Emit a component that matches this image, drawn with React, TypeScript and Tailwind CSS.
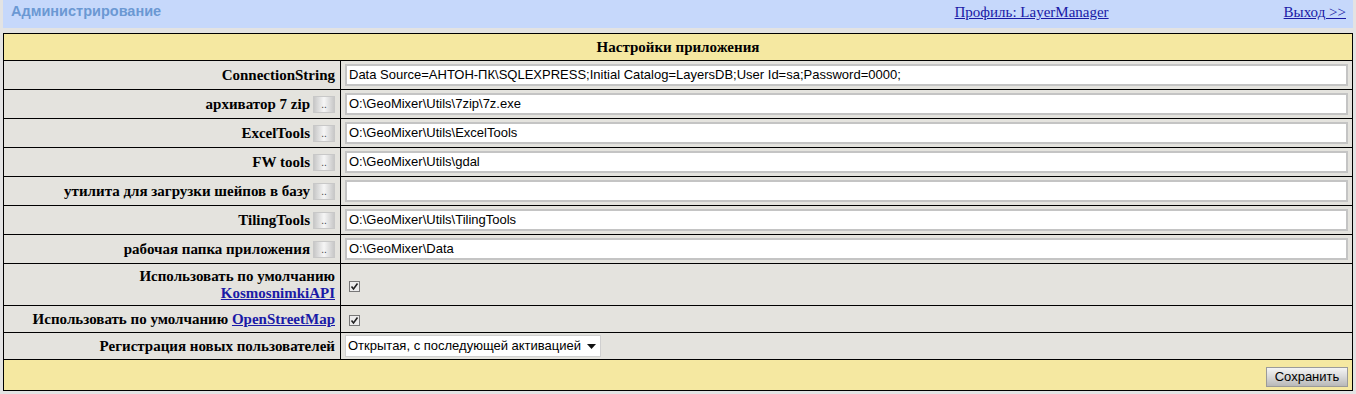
const ROWS: { label: string; value: string; browse: boolean }[] = [
  { label: "ConnectionString", value: "Data Source=АНТОН-ПК\\SQLEXPRESS;Initial Catalog=LayersDB;User Id=sa;Password=0000;", browse: false },
  { label: "архиватор 7 zip", value: "O:\\GeoMixer\\Utils\\7zip\\7z.exe", browse: true },
  { label: "ExcelTools", value: "O:\\GeoMixer\\Utils\\ExcelTools", browse: true },
  { label: "FW tools", value: "O:\\GeoMixer\\Utils\\gdal", browse: true },
  { label: "утилита для загрузки шейпов в базу", value: "", browse: true },
  { label: "TilingTools", value: "O:\\GeoMixer\\Utils\\TilingTools", browse: true },
  { label: "рабочая папка приложения", value: "O:\\GeoMixer\\Data", browse: true },
];

function BrowseButton() {
  return (
    <span className="ml-[3px] inline-flex h-[17px] w-[22px] items-center justify-center border border-[#c8c8c8] bg-[linear-gradient(to_right,#c8c8c8,#f6f6f6_50%,#c8c8c8)] align-middle font-['Liberation_Sans',Arial,sans-serif] text-[10px] font-normal leading-none text-[#444]">
      ..
    </span>
  );
}

function Check() {
  return (
    <span className="inline-flex h-[11px] w-[11px] items-center justify-center border border-[#777] bg-[#ececec]">
      <svg width="9" height="9" viewBox="0 0 9 9">
        <path d="M1.5 4.5 L3.5 7 L7.5 1.5" fill="none" stroke="#222" strokeWidth="1.6" />
      </svg>
    </span>
  );
}

const labelCell =
  "border border-black bg-[#e4e3de] pr-[5px] text-right align-middle font-['Liberation_Serif','Times_New_Roman',serif] text-[15px] font-bold text-black";
const valueCell = "border border-black bg-[#e4e3de] px-[4px] align-middle";
const link = "text-[#1a1aa6] underline";

export default function App() {
  return (
    <div className="min-h-[394px] w-[1356px] bg-[#e3e3e3] px-[3px]">
      {/* top bar */}
      <div className="flex h-[28px] items-start bg-[#c6d8fb] pl-[8px] pr-[7px] pt-[1px]">
        <span className="font-['Liberation_Sans',Arial,sans-serif] text-[14.5px] font-bold text-[#6b98d3]">
          Администрирование
        </span>
        <a className={`ml-auto font-['Liberation_Serif','Times_New_Roman',serif] text-[15px] ${link}`}>
          Профиль: LayerManager
        </a>
        <a className={`ml-[175px] font-['Liberation_Serif','Times_New_Roman',serif] text-[15px] ${link}`}>
          Выход &gt;&gt;
        </a>
      </div>

      <table className="mt-[5px] w-full border-collapse border border-black">
        <tbody>
          <tr className="h-[27px]">
            <td
              colSpan={2}
              className="border border-black bg-[#f5e8a1] text-center font-['Liberation_Serif','Times_New_Roman',serif] text-[15px] font-bold text-black"
            >
              Настройки приложения
            </td>
          </tr>
          {ROWS.map((r) => (
            <tr key={r.label} className="h-[29px]">
              <td className={`${labelCell} w-[337px] whitespace-nowrap`}>
                <span className="align-middle">{r.label}</span>
                {r.browse && <BrowseButton />}
              </td>
              <td className={valueCell}>
                <div className="flex h-[22px] items-center border-2 border-[#c4c4c4] bg-white px-[2px] font-['Liberation_Sans',Arial,sans-serif] text-[13px] text-black">
                  {r.value}
                </div>
              </td>
            </tr>
          ))}
          <tr className="h-[42px]">
            <td className={`${labelCell} bg-[#e0e0e0] leading-[17px]`}>
              Использовать по умолчанию
              <br />
              <a className={link}>KosmosnimkiAPI</a>
            </td>
            <td className={`${valueCell} bg-[#e0e0e0] pl-[8px]`}>
              <Check />
            </td>
          </tr>
          <tr className="h-[27px]">
            <td className={`${labelCell} bg-[#e0e0e0]`}>
              Использовать по умолчанию <a className={link}>OpenStreetMap</a>
            </td>
            <td className={`${valueCell} bg-[#e0e0e0] pl-[8px]`}>
              <Check />
            </td>
          </tr>
          <tr className="h-[27px]">
            <td className={`${labelCell} bg-[#e0e0e0]`}>Регистрация новых пользователей</td>
            <td className={`${valueCell} bg-[#e0e0e0]`}>
              <div className="flex h-[22px] w-[256px] items-center border border-[#d0d0d0] bg-white pl-[2px] pr-[4px] font-['Liberation_Sans',Arial,sans-serif] text-[13px] text-black">
                Открытая, с последующей активацией
                <svg className="ml-auto" width="9" height="5" viewBox="0 0 9 5">
                  <path d="M0 0 H9 L4.5 5 Z" fill="#111" />
                </svg>
              </div>
            </td>
          </tr>
          <tr className="h-[31px]">
            <td colSpan={2} className="border border-black bg-[#f5e8a1] pr-[4px] text-right align-middle">
              <button className="inline-flex h-[20px] w-[82px] items-center justify-center border border-[#9a9a9a] bg-[linear-gradient(to_bottom,#f4f4f4,#d8d8d8_50%,#b8b8b8)] font-['Liberation_Sans',Arial,sans-serif] text-[13px] text-black">
                Сохранить
              </button>
            </td>
          </tr>
        </tbody>
      </table>
    </div>
  );
}
